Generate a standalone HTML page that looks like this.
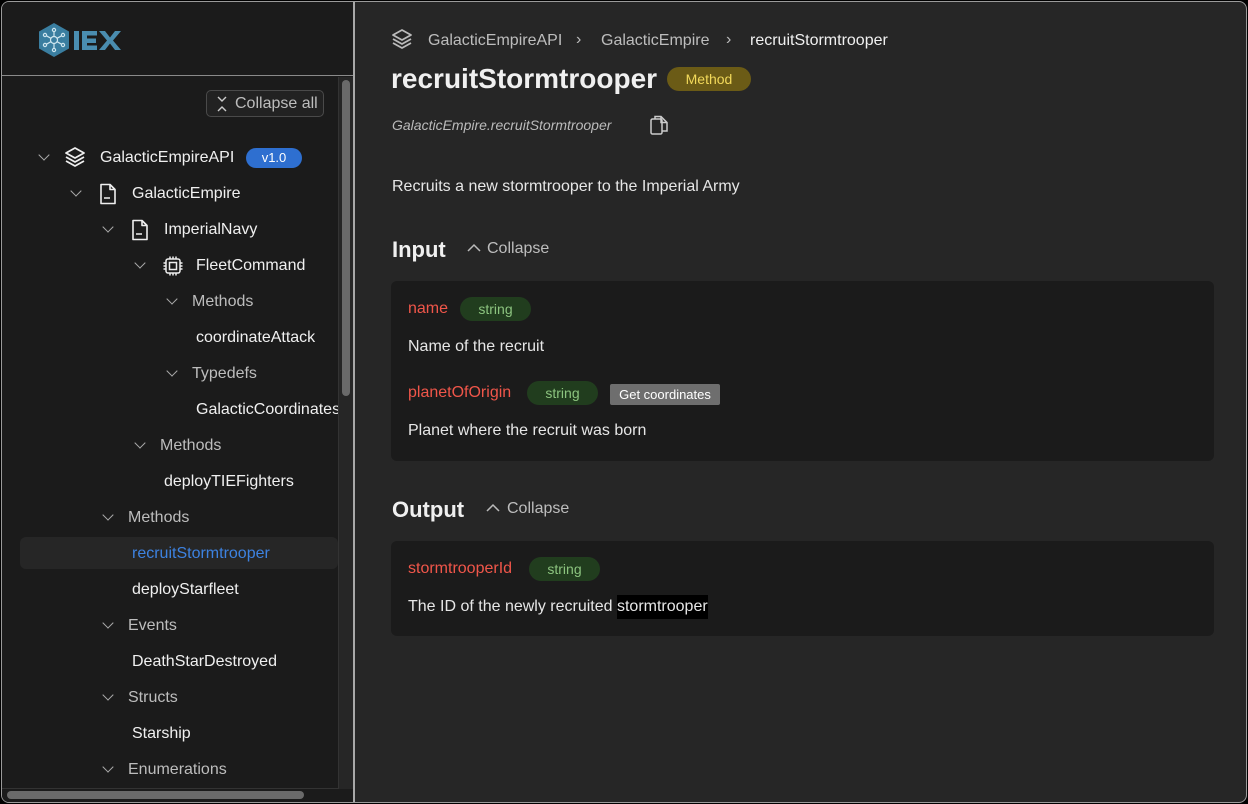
<!DOCTYPE html>
<html><head><meta charset="utf-8"><style>
*{box-sizing:border-box;margin:0;padding:0}
body{width:1248px;height:804px;background:#000;font-family:"Liberation Sans",sans-serif;overflow:hidden;position:relative}
.win{position:absolute;left:1px;top:1px;width:1246px;height:802px;border:1px solid #9a9a9a;border-radius:8px;overflow:hidden;background:#262626}
.side{position:absolute;left:0;top:0;width:353px;height:800px;background:#1b1b1b;border-right:2px solid #a8a8a8}
.head{height:74px;border-bottom:1px solid #8a8a8a;position:relative}
.track{position:absolute;left:336px;top:75px;width:15px;height:712px;background:#262626;border-left:1px solid #333}
.thumb{position:absolute;left:340px;top:78px;width:8px;height:316px;background:#6a6a6a;border-radius:4px}
.hbar{position:absolute;left:5px;top:789px;width:297px;height:8px;background:#6a6a6a;border-radius:4px}
.t{position:absolute;font-size:16px;color:#f0f0f0;white-space:nowrap}
.g{color:#bdbdbd}
.chev{position:absolute;width:8px;height:8px;border-right:1.5px solid #aaa;border-bottom:1.5px solid #aaa;transform:rotate(45deg)}
.main .t{}
.card{position:absolute;left:389px;width:823px;background:#1b1b1b;border-radius:6px}
.red{color:#f0564a}
.pill{position:absolute;background:#213d1e;color:#8cc47f;font-size:14px;border-radius:12px;height:24px;line-height:24px;text-align:center}
</style></head><body>
<div class="win">
<div class="side">
 <div class="head">
  <svg style="position:absolute;left:35px;top:20px" width="90" height="36" viewBox="0 0 90 36">
   <polygon points="17,1 32,9.5 32,26.5 17,35 2,26.5 2,9.5" fill="#3a7ea0"/>
   <g stroke="#cfe6ef" stroke-width="1.2" fill="none"><circle cx="17" cy="18" r="3.5"/><circle cx="17" cy="8" r="1.6"/><circle cx="17" cy="28" r="1.6"/><circle cx="8" cy="13" r="1.6"/><circle cx="26" cy="13" r="1.6"/><circle cx="8" cy="23" r="1.6"/><circle cx="26" cy="23" r="1.6"/><path d="M17 14.5V9.6M17 21.5V26.4M14 16.3L9.4 13.8M20 16.3L24.6 13.8M14 19.7L9.4 22.2M20 19.7L24.6 22.2"/></g>
   <rect x="37" y="9" width="5" height="19" fill="#4a8db0"/>
   <path d="M45 9h15v4.5H50v3h9v4.5h-9v2.5h10V28H45z" fill="#4a8db0"/>
   <path d="M62 9h6l5 6.5L78 9h6l-8 9.5L84 28h-6l-5-6.5L68 28h-6l8-9.5z" fill="#4a8db0"/>
  </svg>
 </div>
 <div style="position:absolute;left:204px;top:88px;width:118px;height:27px;border:1px solid #4a4a4a;border-radius:5px;background:#222"></div>
 <svg style="position:absolute;left:214px;top:94px" width="12" height="16" viewBox="0 0 12 16"><path d="M2 1l4 4 4-4M2 15l4-4 4 4" stroke="#ccc" stroke-width="1.4" fill="none"/></svg>
 <div class="t g" style="left:233px;top:93px">Collapse all</div>

 <div class="chev" style="left:38px;top:149px"></div>
 <svg style="position:absolute;left:62px;top:144px" width="22" height="22" viewBox="0 0 22 22"><g stroke="#eee" stroke-width="1.8" fill="none" stroke-linejoin="round"><path d="M11 2L20 7 11 12 2 7z"/><path d="M2 11l9 5 9-5M2 15l9 5 9-5"/></g></svg>
 <div class="t" style="left:98px;top:147px">GalacticEmpireAPI</div>
 <div style="position:absolute;left:244px;top:146px;width:56px;height:20px;border-radius:10px;background:#2e6fd0;color:#fff;font-size:13px;text-align:center;line-height:20px">v1.0</div>

 <div class="chev" style="left:70px;top:185px"></div>
 <svg style="position:absolute;left:97px;top:181px" width="18" height="22" viewBox="0 0 18 22"><path d="M2 1.5h9l5 5V20.5H2z M11 1.5v5h5 M5 15h6" stroke="#eee" stroke-width="1.6" fill="none" stroke-linejoin="round"/></svg>
 <div class="t" style="left:130px;top:183px">GalacticEmpire</div>

 <div class="chev" style="left:102px;top:221px"></div>
 <svg style="position:absolute;left:129px;top:217px" width="18" height="22" viewBox="0 0 18 22"><path d="M2 1.5h9l5 5V20.5H2z M11 1.5v5h5 M5 15h6" stroke="#eee" stroke-width="1.6" fill="none" stroke-linejoin="round"/></svg>
 <div class="t" style="left:162px;top:219px">ImperialNavy</div>

 <div class="chev" style="left:134px;top:257px"></div>
 <svg style="position:absolute;left:161px;top:254px" width="20" height="20" viewBox="0 0 20 20"><g stroke="#eee" stroke-width="1.5" fill="none"><rect x="3" y="3" width="14" height="14" rx="2"/><rect x="6.5" y="6.5" width="7" height="7"/><path d="M7 0.5v2.5M10 0.5v2.5M13 0.5v2.5M7 17v2.5M10 17v2.5M13 17v2.5M0.5 7h2.5M0.5 10h2.5M0.5 13h2.5M17 7h2.5M17 10h2.5M17 13h2.5"/></g></svg>
 <div class="t" style="left:194px;top:255px">FleetCommand</div>

 <div class="chev" style="left:166px;top:293px"></div>
 <div class="t g" style="left:190px;top:291px">Methods</div>
 <div class="t" style="left:194px;top:327px">coordinateAttack</div>
 <div class="chev" style="left:166px;top:365px"></div>
 <div class="t g" style="left:190px;top:363px">Typedefs</div>
 <div class="t" style="left:194px;top:399px">GalacticCoordinates</div>
 <div class="chev" style="left:134px;top:437px"></div>
 <div class="t g" style="left:158px;top:435px">Methods</div>
 <div class="t" style="left:162px;top:471px">deployTIEFighters</div>
 <div class="chev" style="left:102px;top:509px"></div>
 <div class="t g" style="left:126px;top:507px">Methods</div>
 <div style="position:absolute;left:18px;top:535px;width:318px;height:32px;background:#262626;border-radius:6px"></div>
 <div class="t" style="left:130px;top:543px;color:#3d82e0">recruitStormtrooper</div>
 <div class="t" style="left:130px;top:579px">deployStarfleet</div>
 <div class="chev" style="left:102px;top:617px"></div>
 <div class="t g" style="left:126px;top:615px">Events</div>
 <div class="t" style="left:130px;top:651px">DeathStarDestroyed</div>
 <div class="chev" style="left:102px;top:689px"></div>
 <div class="t g" style="left:126px;top:687px">Structs</div>
 <div class="t" style="left:130px;top:723px">Starship</div>
 <div class="chev" style="left:102px;top:761px"></div>
 <div class="t g" style="left:126px;top:759px">Enumerations</div>
 <div class="track"></div><div class="thumb"></div>
 <div style="position:absolute;left:0;top:786px;width:336px;height:14px;background:#1b1b1b;border-top:1px solid #333"></div>
 <div class="hbar"></div>
</div>

<div class="main">
 <svg style="position:absolute;left:389px;top:26px" width="22" height="22" viewBox="0 0 22 22"><g stroke="#bbb" stroke-width="1.8" fill="none" stroke-linejoin="round"><path d="M11 2L20 7 11 12 2 7z"/><path d="M2 11l9 5 9-5M2 15l9 5 9-5"/></g></svg>
 <div class="t g" style="left:426px;top:30px">GalacticEmpireAPI</div>
 <div class="t g" style="left:574px;top:29px">&#8250;</div>
 <div class="t g" style="left:599px;top:30px">GalacticEmpire</div>
 <div class="t g" style="left:724px;top:29px">&#8250;</div>
 <div class="t" style="left:748px;top:30px">recruitStormtrooper</div>
 <div class="t" style="left:389px;top:61px;font-size:28px;font-weight:bold">recruitStormtrooper</div>
 <div style="position:absolute;left:665px;top:65px;width:84px;height:24px;border-radius:12px;background:#6b5b16;color:#f2d95a;font-size:14px;text-align:center;line-height:24px">Method</div>
 <div class="t" style="left:390px;top:115px;font-size:14px;font-style:italic;color:#bbb">GalacticEmpire.recruitStormtrooper</div>
 <svg style="position:absolute;left:647px;top:112px" width="20" height="22" viewBox="0 0 20 22"><g stroke="#ccc" stroke-width="1.5" fill="none"><rect x="2" y="5" width="11" height="15" rx="1.5"/><path d="M6 5V2.5h6l6 6V17h-5"/><path d="M12 2.5v6h6"/></g></svg>
 <div class="t" style="left:390px;top:176px;font-size:16px;color:#e6e6e6">Recruits a new stormtrooper to the Imperial Army</div>

 <div class="t" style="left:390px;top:235px;font-size:22px;font-weight:bold">Input</div>
 <svg style="position:absolute;left:465px;top:241px" width="14" height="10"><path d="M1 8l6-6 6 6" stroke="#bbb" stroke-width="1.5" fill="none"/></svg>
 <div class="t g" style="left:485px;top:238px">Collapse</div>
 <div class="card" style="top:279px;height:180px"></div>
 <div class="t red" style="left:406px;top:298px">name</div>
 <div class="pill" style="left:458px;top:295px;width:71px">string</div>
 <div class="t" style="left:406px;top:336px;color:#e6e6e6">Name of the recruit</div>
 <div class="t red" style="left:406px;top:382px">planetOfOrigin</div>
 <div class="pill" style="left:525px;top:379px;width:71px">string</div>
 <div style="position:absolute;left:608px;top:382px;width:110px;height:21px;background:#6e6e6e;color:#fff;font-size:13px;text-align:center;line-height:21px;border-radius:2px">Get coordinates</div>
 <div class="t" style="left:406px;top:420px;color:#e6e6e6">Planet where the recruit was born</div>

 <div class="t" style="left:390px;top:495px;font-size:22px;font-weight:bold">Output</div>
 <svg style="position:absolute;left:484px;top:501px" width="14" height="10"><path d="M1 8l6-6 6 6" stroke="#bbb" stroke-width="1.5" fill="none"/></svg>
 <div class="t g" style="left:505px;top:498px">Collapse</div>
 <div class="card" style="top:539px;height:95px"></div>
 <div class="t red" style="left:406px;top:558px">stormtrooperId</div>
 <div class="pill" style="left:527px;top:555px;width:71px">string</div>
 <div class="t" style="left:406px;top:596px;color:#e6e6e6">The ID of the newly recruited <span style="background:#000;padding:3px 0 4px">stormtrooper</span></div>
</div>
</div>
</body></html>
